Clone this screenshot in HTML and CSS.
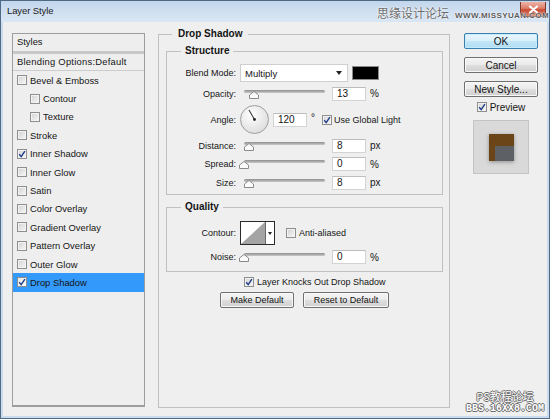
FILE: index.html
```html
<!DOCTYPE html>
<html>
<head>
<meta charset="utf-8">
<title>Layer Style</title>
<link rel="stylesheet" href="styles.css">
</head>
<body>
<div class="window">
  <div class="titlebar">
    <span class="title">Layer Style</span>
    <span class="close"><svg width="11" height="9" viewBox="0 0 11 9"><path d="M2 1.5 L9 7.5 M9 1.5 L2 7.5" stroke="#fff" stroke-width="2.2" stroke-linecap="round"/></svg></span>
    <div class="wm-top"><span class="wm-cn">思缘设计论坛</span><span class="wm-en">WWW.MISSYUAN.COM</span></div>
  </div>
  <div class="content">
    <div class="styles">
      <div class="styles-head">Styles</div>
      <div class="styles-blend">Blending Options:Default</div>
      <ul class="fx-list">
        <li class="fx"><span class="cb"></span>Bevel &amp; Emboss</li>
        <li class="fx sub-fx"><span class="cb"></span>Contour</li>
        <li class="fx sub-fx"><span class="cb"></span>Texture</li>
        <li class="fx"><span class="cb"></span>Stroke</li>
        <li class="fx"><span class="cb"><svg class="tick" width="8" height="8" viewBox="0 0 8 8"><path d="M1.2 4.2 L3.2 6.6 L6.9 1.2" fill="none" stroke="#1d3b86" stroke-width="1.4"/></svg></span>Inner Shadow</li>
        <li class="fx"><span class="cb"></span>Inner Glow</li>
        <li class="fx"><span class="cb"></span>Satin</li>
        <li class="fx"><span class="cb"></span>Color Overlay</li>
        <li class="fx"><span class="cb"></span>Gradient Overlay</li>
        <li class="fx"><span class="cb"></span>Pattern Overlay</li>
        <li class="fx"><span class="cb"></span>Outer Glow</li>
        <li class="fx sel"><span class="cb"><svg class="tick" width="8" height="8" viewBox="0 0 8 8"><path d="M1.2 4.2 L3.2 6.6 L6.9 1.2" fill="none" stroke="#1d3b86" stroke-width="1.4"/></svg></span>Drop Shadow</li>
      </ul>
    </div>

    <fieldset class="group main">
      <legend>Drop Shadow</legend>
      <fieldset class="group inner structure">
        <legend>Structure</legend>
        <div class="rows">
          <div class="row h18">
            <span class="lbl">Blend Mode:</span>
            <div class="select"><span>Multiply</span><span class="caret"></span></div>
            <span class="swatch"></span>
          </div>
          <div class="row">
            <span class="lbl">Opacity:</span>
            <div class="slider"><div class="track"></div><svg class="thumb" style="left:9px" width="10" height="8" viewBox="0 0 10 8"><path d="M0.5 7.5 V4 L5 0.5 L9.5 4 V7.5 Z" fill="#fbfbfb" stroke="#8a8a8a"/></svg></div>
            <span class="num">13</span><span class="unit">%</span>
          </div>
          <div class="row h29">
            <span class="lbl">Angle:</span>
            <svg class="dial" width="29" height="29" viewBox="0 0 29 29"><defs><radialGradient id="dg" cx="0.4" cy="0.35" r="0.7"><stop offset="0" stop-color="#ffffff"/><stop offset="1" stop-color="#dcdcdc"/></radialGradient></defs><circle cx="14.5" cy="14.5" r="14" fill="url(#dg)" stroke="#9e9e9e"/><line x1="14.5" y1="14.5" x2="9" y2="5" stroke="#3a3a3a" stroke-width="1.1"/><circle cx="14.5" cy="14.5" r="1.4" fill="#222"/></svg>
            <span class="num">120</span><span class="unit deg">°</span>
            <span class="cb gl"><svg class="tick" width="8" height="8" viewBox="0 0 8 8"><path d="M1.2 4.2 L3.2 6.6 L6.9 1.2" fill="none" stroke="#1d3b86" stroke-width="1.4"/></svg></span><span class="cblbl">Use Global Light</span>
          </div>
          <div class="row">
            <span class="lbl">Distance:</span>
            <div class="slider"><div class="track"></div><svg class="thumb" style="left:4px" width="10" height="8" viewBox="0 0 10 8"><path d="M0.5 7.5 V4 L5 0.5 L9.5 4 V7.5 Z" fill="#fbfbfb" stroke="#8a8a8a"/></svg></div>
            <span class="num">8</span><span class="unit">px</span>
          </div>
          <div class="row">
            <span class="lbl">Spread:</span>
            <div class="slider"><div class="track"></div><svg class="thumb" style="left:-1px" width="10" height="8" viewBox="0 0 10 8"><path d="M0.5 7.5 V4 L5 0.5 L9.5 4 V7.5 Z" fill="#fbfbfb" stroke="#8a8a8a"/></svg></div>
            <span class="num">0</span><span class="unit">%</span>
          </div>
          <div class="row">
            <span class="lbl">Size:</span>
            <div class="slider"><div class="track"></div><svg class="thumb" style="left:4px" width="10" height="8" viewBox="0 0 10 8"><path d="M0.5 7.5 V4 L5 0.5 L9.5 4 V7.5 Z" fill="#fbfbfb" stroke="#8a8a8a"/></svg></div>
            <span class="num">8</span><span class="unit">px</span>
          </div>
        </div>
      </fieldset>

      <fieldset class="group inner quality">
        <legend>Quality</legend>
        <div class="rows q">
          <div class="row h24">
            <span class="lbl">Contour:</span>
            <div class="contour">
              <svg class="contour-img" width="24" height="22" viewBox="0 0 24 22"><rect width="24" height="22" fill="#fff"/><polygon points="0,22 24,0 24,22" fill="#a4a4a4"/></svg>
              <span class="contour-btn"><span class="caret"></span></span>
            </div>
            <span class="cb aa"></span><span class="cblbl">Anti-aliased</span>
          </div>
          <div class="row">
            <span class="lbl">Noise:</span>
            <div class="slider"><div class="track"></div><svg class="thumb" style="left:-1px" width="10" height="8" viewBox="0 0 10 8"><path d="M0.5 7.5 V4 L5 0.5 L9.5 4 V7.5 Z" fill="#fbfbfb" stroke="#8a8a8a"/></svg></div>
            <span class="num">0</span><span class="unit">%</span>
          </div>
        </div>
      </fieldset>

      <div class="knock"><span class="cb"><svg class="tick" width="8" height="8" viewBox="0 0 8 8"><path d="M1.2 4.2 L3.2 6.6 L6.9 1.2" fill="none" stroke="#1d3b86" stroke-width="1.4"/></svg></span><span class="cblbl">Layer Knocks Out Drop Shadow</span></div>
      <div class="btn-row">
        <button class="btn small w74">Make Default</button>
        <button class="btn small w86">Reset to Default</button>
      </div>
    </fieldset>

    <div class="side">
      <button class="btn w74 default">OK</button>
      <button class="btn w74">Cancel</button>
      <button class="btn w74">New Style...</button>
      <div class="preview-row"><span class="cb"><svg class="tick" width="8" height="8" viewBox="0 0 8 8"><path d="M1.2 4.2 L3.2 6.6 L6.9 1.2" fill="none" stroke="#1d3b86" stroke-width="1.4"/></svg></span><span class="cblbl">Preview</span></div>
      <div class="preview-box"><div class="preview-swatch"></div></div>
    </div>
  </div>
  <div class="wm-bottom"><span class="wm-ps">PS教程论坛</span><span class="wm-bbs">BBS.16XX8.COM</span></div>
</div>
</body>
</html>
```

FILE: styles.css
```css
* { box-sizing: border-box; }
html, body { margin: 0; padding: 0; }
body {
  width: 550px;
  height: 419px;
  overflow: hidden;
  font-family: "Liberation Sans", Arial, sans-serif;
  font-size: 10px;
  color: #151515;
  background: #efefef;
}

.window {
  position: relative;
  width: 550px;
  height: 419px;
  border: 1px solid #4e6a84;
  display: flex;
  flex-direction: column;
  background: #efefef;
}

/* title bar */
.titlebar {
  position: relative;
  height: 21px;
  flex: none;
  display: flex;
  align-items: flex-start;
  padding-left: 6px;
  background: linear-gradient(#c2d6ec, #d1e0f1 55%, #d9e6f4);
}
.title {
  margin-top: 4px;
  font-size: 9.5px;
  letter-spacing: -0.1px;
  color: #1c1c1c;
}
.close {
  margin-left: auto;
  margin-right: 3px;
  margin-top: 1px;
  width: 26px;
  height: 15px;
  border: 1px solid #7b3a30;
  border-top: 0;
  border-radius: 0 0 4px 4px;
  background: linear-gradient(#eeb2a6, #dc7e69 45%, #c94c36 55%, #d8775f);
  display: flex;
  align-items: center;
  justify-content: center;
}
.wm-top {
  position: absolute;
  left: 376px;
  top: 3px;
  display: flex;
  align-items: baseline;
  gap: 6px;
  white-space: nowrap;
}
.wm-cn {
  font-family: "Noto Sans CJK SC", sans-serif;
  font-size: 12px;
  color: #6b6b6b;
  text-shadow: 0 0 2px #fff, 0 0 1px #fff;
}
.wm-en {
  font-size: 8px;
  font-weight: bold;
  letter-spacing: 0.4px;
  color: #5c5c5c;
  text-shadow: 0 0 2px #fff, 0 0 1px #fff;
}

/* body */
.content {
  flex: 1;
  display: flex;
  align-items: flex-start;
  padding: 6px 0 0 9px;
  border: 2px solid #c9dcef;
  border-top: 0;
}

/* styles list */
.styles {
  flex: none;
  margin-top: 5px;
  width: 133px;
  height: 374px;
  border: 1px solid #9d9d9d;
  border-bottom-width: 2px;
  background: #eeeeee;
  font-size: 9.4px;
}
.styles-head {
  height: 20px;
  line-height: 15px;
  padding-left: 4px;
  border-bottom: 3px solid #c8c8c8;
}
.styles-blend {
  height: 17px;
  line-height: 16px;
  padding-left: 4px;
  letter-spacing: 0.25px;
  border-bottom: 1px solid #cdcdcd;
}
.fx-list { list-style: none; margin: 0; padding: 0; }
.fx {
  height: 18.4px;
  display: flex;
  align-items: center;
  padding-left: 4px;
}
.fx.sub-fx { padding-left: 17px; }
.fx.sel { background: #3399fb; }

.cb {
  flex: none;
  width: 10px;
  height: 10px;
  margin-right: 3px;
  border: 1px solid #8f8f8f;
  background: linear-gradient(135deg, #d2d2d2, #f7f7f7);
  box-shadow: inset 0 0 0 1px #f2f2f2;
  display: flex;
  align-items: center;
  justify-content: center;
}
.fx.sel .cb { box-shadow: none; background: linear-gradient(135deg, #e6e6e6, #fdfdfd); }
.tick { display: block; }
.cblbl { white-space: nowrap; }

/* group boxes */
fieldset { margin: 0; min-width: 0; }
.group { border: 1px solid #c0c0c0; }
legend { font-weight: bold; line-height: 12px; font-size: 10px; }
.main {
  flex: none;
  margin-left: 13px;
  width: 292px;
  height: 380px;
  padding: 5px 6px 0 7px;
  font-size: 9px;
}
.main > legend { margin-left: 6px; padding: 0 6px; }
.inner { padding: 0; }
.inner > legend { margin-left: 14px; padding: 0 4px; }
.structure { padding: 7px 0 4.5px 0; }
.quality { margin-top: 6px; padding: 8px 0 7px 0; }

.rows { display: flex; flex-direction: column; gap: 4.5px; }
.rows.q { gap: 5px; }
.row { display: flex; align-items: center; height: 14px; white-space: nowrap; }
.row.h18 { height: 18px; }
.row.h29 { height: 29px; }
.row.h24 { height: 24px; }
.lbl { width: 69px; flex: none; text-align: right; }

.select {
  margin-left: 4px;
  width: 108px;
  height: 18px;
  background: #fff;
  border: 1px solid #cfcfcf;
  display: flex;
  align-items: center;
  padding: 0 0 0 4px;
  font-size: 9.5px;
}
.caret {
  margin-left: auto;
  margin-right: 5px;
  width: 0;
  height: 0;
  border-left: 3px solid transparent;
  border-right: 3px solid transparent;
  border-top: 4px solid #222;
}
.swatch {
  margin-left: 4px;
  width: 27px;
  height: 14px;
  background: #000;
  border: 1px solid #8a8a8a;
}

.slider { position: relative; margin-left: 4px; width: 88px; height: 12px; flex: none; }
.track {
  margin: 2px 0 0 4px;
  width: 81px;
  height: 3px;
  border-radius: 2px;
  background: linear-gradient(#8e8e8e, #c9c9c9);
}
.thumb { position: absolute; top: 3px; display: block; }

.num {
  margin-left: 4px;
  width: 34px;
  height: 14px;
  flex: none;
  background: #fff;
  border: 1px solid #d3d3d3;
  border-top-color: #bdbdbd;
  padding-left: 4px;
  line-height: 12px;
  font-size: 10px;
}
.unit { margin-left: 4px; font-size: 10px; }
.unit.deg { margin-left: 4px; width: 7px; align-self: flex-start; margin-top: 7px; }
.dial { margin-left: 4px; flex: none; display: block; }
.cb.gl { margin-left: 4px; margin-right: 2px; }

.contour {
  margin-left: 4px;
  height: 24px;
  display: flex;
  border: 1px solid #2a2a2a;
  flex: none;
}
.contour-img { display: block; }
.contour-btn {
  width: 9px;
  background: #fff;
  border-left: 1px solid #6a6a6a;
  display: flex;
  align-items: center;
}
.contour-btn .caret { margin: 0 auto; border-left-width: 2.5px; border-right-width: 2.5px; border-top-width: 3px; }
.cb.aa { margin-left: 11px; }

.knock {
  margin-top: 4px;
  height: 12px;
  display: flex;
  align-items: center;
  padding-left: 78px;
}
.btn-row {
  margin-top: 4px;
  display: flex;
  justify-content: center;
  gap: 9px;
}

.btn {
  height: 16px;
  padding: 0;
  border: 1px solid #707070;
  border-radius: 2px;
  background: linear-gradient(#f4f4f4 0%, #ebebeb 48%, #dedede 52%, #d0d0d0 100%);
  box-shadow: inset 0 0 0 1px #f9f9f9;
  font-family: "Liberation Sans", Arial, sans-serif;
  font-size: 10px;
  color: #111;
  display: flex;
  align-items: center;
  justify-content: center;
}
.btn.small { font-size: 9px; }
.btn.w74 { width: 74px; }
.btn.w86 { width: 86px; }
.btn.default {
  border-color: #3c7fb1;
  background: linear-gradient(#eaf6fd 0%, #d9f0fc 48%, #c2e6f8 52%, #b0dcf3 100%);
  box-shadow: inset 0 0 0 1px #c5ecfd;
}

.side {
  flex: none;
  margin-left: 14px;
  margin-top: 5px;
  width: 74px;
  display: flex;
  flex-direction: column;
  align-items: center;
}
.side .btn + .btn { margin-top: 8px; }
.preview-row { margin-top: 4px; height: 12px; display: flex; align-items: center; }
.preview-box {
  margin-top: 7px;
  width: 56px;
  height: 54px;
  border: 1px solid #c4c4c4;
  background: #d9d9d9;
  display: flex;
  align-items: center;
  justify-content: center;
}
.preview-swatch {
  width: 25px;
  height: 27px;
  background: linear-gradient(#5d6064, #5d6064) no-repeat right bottom / 19px 15px, #6b4417;
  box-shadow: 0 1px 4px rgba(0, 0, 0, 0.35);
}

.wm-bottom {
  position: absolute;
  left: 465px;
  top: 389px;
  display: flex;
  flex-direction: column;
  align-items: center;
  white-space: nowrap;
}
.wm-ps {
  font-family: "Noto Sans CJK SC", sans-serif;
  font-size: 11px;
  line-height: 13px;
  color: #fff;
  text-shadow: -1px 0 #6a6a6a, 1px 0 #6a6a6a, 0 -1px #6a6a6a, 0 1px #6a6a6a;
}
.wm-bbs {
  font-family: "Liberation Mono", monospace;
  font-size: 10px;
  line-height: 12px;
  font-weight: bold;
  color: #fff;
  text-shadow: -1px 0 #6a6a6a, 1px 0 #6a6a6a, 0 -1px #6a6a6a, 0 1px #6a6a6a;
}
```
